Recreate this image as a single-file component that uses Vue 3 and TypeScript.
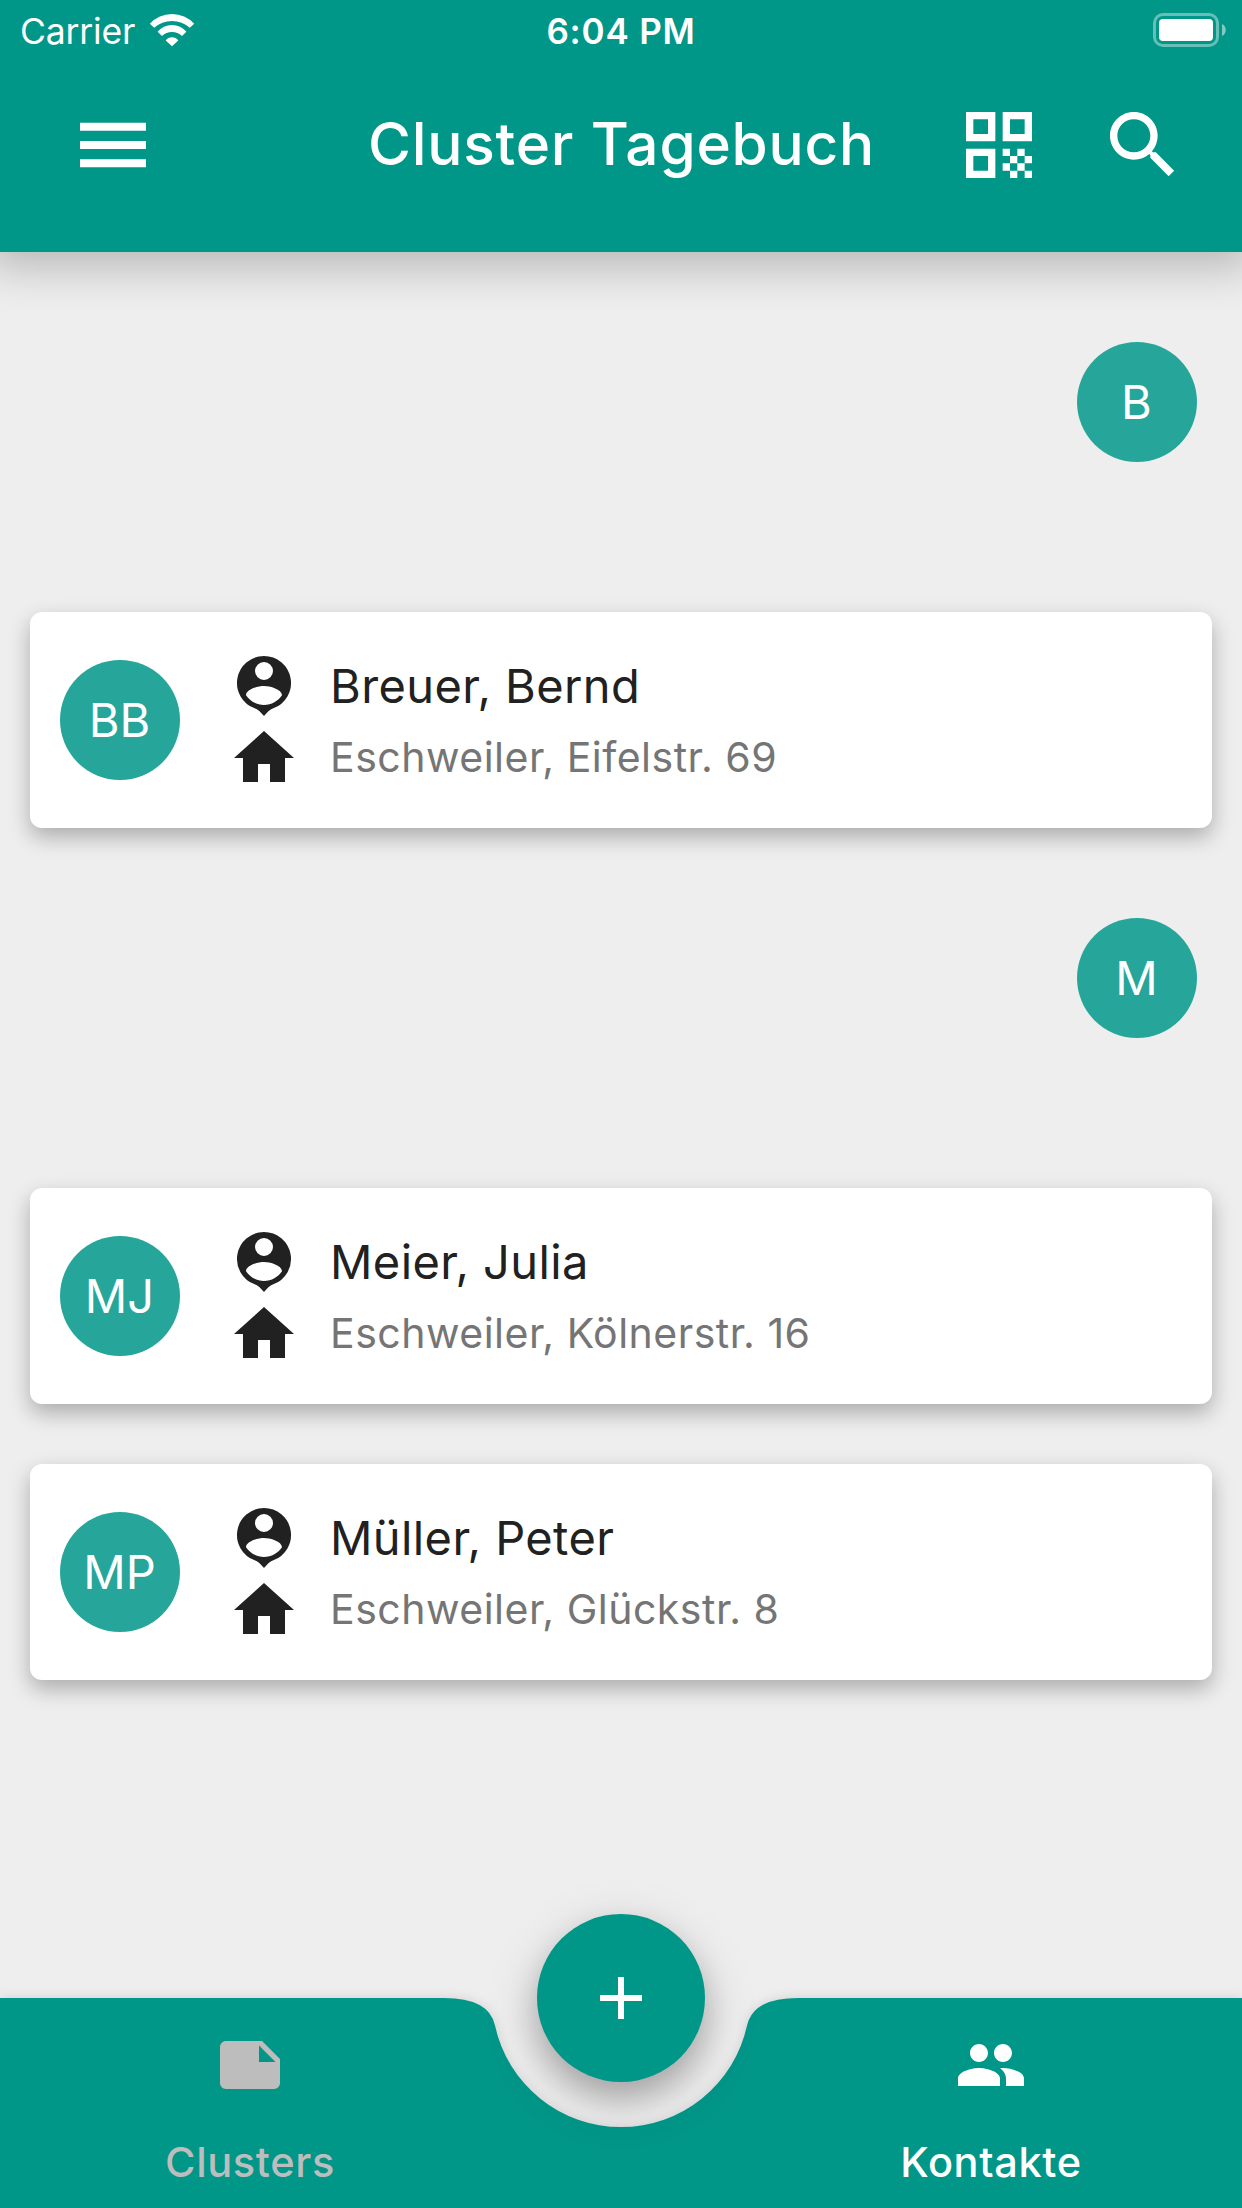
<script setup lang="ts">
interface Contact {
  initials: string
  name: string
  address: string
}

interface Section {
  letter: string
  contacts: Contact[]
}

const sections: Section[] = [
  {
    letter: 'B',
    contacts: [{ initials: 'BB', name: 'Breuer, Bernd', address: 'Eschweiler, Eifelstr. 69' }],
  },
  {
    letter: 'M',
    contacts: [
      { initials: 'MJ', name: 'Meier, Julia', address: 'Eschweiler, Kölnerstr. 16' },
      { initials: 'MP', name: 'Müller, Peter', address: 'Eschweiler, Glückstr. 8' },
    ],
  },
]
</script>

<template>
  <div class="screen">
    <header class="app-bar">
      <div class="status">
        <div class="status-left">
          <span class="carrier">Carrier</span>
          <svg class="wifi" width="46" height="34" viewBox="149 12.5 46 34">
            <path d="M149.8 23.2A30 30 0 0 1 194.2 23.2L189.8 27.3A26.5 26.5 0 0 0 154.2 27.3ZM157.6 31.3A18.6 18.6 0 0 1 186.4 31.3L182 35.6A14 14 0 0 0 162 35.6ZM165.7 39.9A8 8 0 0 1 178.3 39.9L172 45.7Z" />
          </svg>
        </div>
        <span class="time">6:04 PM</span>
        <div class="status-right">
          <svg width="74" height="34" viewBox="0 0 74 34">
            <rect x="1.5" y="1.5" width="63" height="31" rx="8.5" fill="none" stroke="#fff" stroke-opacity=".4" stroke-width="3" />
            <rect x="6" y="6" width="54" height="22" rx="4" fill="#fff" />
            <path d="M69 11c5 2 5 10 0 12z" fill="#fff" fill-opacity=".5" />
          </svg>
        </div>
      </div>
      <div class="toolbar">
        <svg class="tool menu" viewBox="0 0 24 24"><path d="M3 18.1h18v-2.2H3v2.2zm0-5h18v-2.2H3v2.2zm0-7.2v2.2h18V5.9H3z" /></svg>
        <h1 class="title">Cluster Tagebuch</h1>
        <svg class="tool qr" viewBox="0 0 24 24">
          <path d="M3 11h8V3H3v8zm2-6h4v4H5V5zM3 21h8v-8H3v8zm2-6h4v4H5v-4zM13 3v8h8V3h-8zm6 6h-4V5h4v4zM13 13h2v2h-2zM17 13h2v2h-2zM15 15h2v2h-2zM19 15h2v2h-2zM13 17h2v2h-2zM17 17h2v2h-2zM15 19h2v2h-2zM19 19h2v2h-2z" />
        </svg>
        <svg class="tool search" viewBox="0 0 24 24">
          <path d="M15.5 14h-.79l-.28-.27C15.41 12.59 16 11.11 16 9.5 16 5.91 13.09 3 9.5 3S3 5.91 3 9.5 5.91 16 9.5 16c1.61 0 3.09-.59 4.23-1.57l.27.28v.79l5 4.99L20.49 19l-4.99-5zm-6 0C7.01 14 5 11.99 5 9.5S7.01 5 9.5 5 14 7.01 14 9.5 11.99 14 9.5 14z" />
        </svg>
      </div>
    </header>

    <main class="list">
      <section v-for="section in sections" :key="section.letter">
        <div class="separator"><div class="avatar">{{ section.letter }}</div></div>
        <article v-for="contact in section.contacts" :key="contact.initials" class="card">
          <div class="avatar">{{ contact.initials }}</div>
          <div class="icons">
            <svg viewBox="0 0 24 24">
              <path fill-rule="evenodd" d="M12 2a9 9 0 0 0-3.1 17.45C10.2 19.9 10.9 20.9 12 22c1.1-1.1 1.8-2.1 3.1-2.55A9 9 0 0 0 12 2zm0 2a3 3 0 1 1 0 6 3 3 0 0 1 0-6zm0 14.3c-2.5 0-4.71-1.28-6-3.22.03-1.99 4-3.08 6-3.08 1.99 0 5.97 1.09 6 3.08-1.29 1.94-3.5 3.22-6 3.22z" />
            </svg>
            <svg viewBox="0 0 24 24"><path d="M10 20v-6h4v6h5v-8h3L12 3 2 12h3v8z" /></svg>
          </div>
          <div class="lines">
            <div class="name"><span>{{ contact.name }}</span></div>
            <div class="address"><span>{{ contact.address }}</span></div>
          </div>
        </article>
      </section>
    </main>

    <nav class="bottom">
      <svg class="bottom-shape" width="1242" height="210" viewBox="0 0 1242 210">
        <path d="M0 0H444Q489 0 494.93 27.35A129 129 0 0 0 747.07 27.35Q753 0 798 0H1242V210H0Z" />
      </svg>
      <div class="tab">
        <svg viewBox="0 0 24 24"><path d="M22 10l-6-6H4c-1.1 0-2 .9-2 2v12.01c0 1.1.9 1.99 2 1.99l16-.01c1.1 0 2-.89 2-1.99v-8zm-7-4.5l5.5 5.5H15V5.5z" /></svg>
        <span>Clusters</span>
      </div>
      <button class="fab" type="button" aria-label="+">
        <svg viewBox="0 0 24 24"><path d="M19 13h-6v6h-2v-6H5v-2h6V5h2v6h6v2z" /></svg>
      </button>
      <div class="tab active">
        <svg viewBox="0 0 24 24">
          <path d="M16 11c1.66 0 2.99-1.34 2.99-3S17.66 5 16 5c-1.66 0-3 1.34-3 3s1.34 3 3 3zm-8 0c1.66 0 2.99-1.34 2.99-3S9.66 5 8 5C6.34 5 5 6.34 5 8s1.34 3 3 3zm0 2c-2.33 0-7 1.17-7 3.5V19h14v-2.5c0-2.33-4.67-3.5-7-3.5zm8 0c-.29 0-.62.02-.97.05 1.16.84 1.97 1.97 1.97 3.45V19h6v-2.5c0-2.33-4.67-3.5-7-3.5z" />
        </svg>
        <span>Kontakte</span>
      </div>
    </nav>
  </div>
</template>

<style>
body {
  margin: 0;
  background: #eee;
}
</style>

<style scoped>
.screen {
  width: 1242px;
  height: 2208px;
  display: flex;
  flex-direction: column;
  overflow: hidden;
  background: #eee;
  font-family: Inter, Roboto, sans-serif;
  color: #fff;
}
svg {
  display: block;
  flex: none;
  fill: currentColor;
}
.app-bar {
  position: relative;
  flex: none;
  box-sizing: border-box;
  height: 252px;
  background: #009688;
  box-shadow: 0 3px 42px 12px rgba(0, 0, 0, 0.23);
}
.status {
  display: grid;
  grid-template-columns: 1fr auto 1fr;
  height: 60px;
  padding: 0 15px;
}
.status-left {
  display: flex;
  align-items: flex-start;
  padding-left: 5px;
}
.carrier {
  width: 129px;
  font-size: 35.5px;
  line-height: 63px;
  letter-spacing: -0.15px;
  white-space: nowrap;
}
.wifi {
  margin-top: 12.5px;
}
.time {
  font-size: 35px;
  font-weight: 600;
  line-height: 63px;
  letter-spacing: 0.8px;
}
.status-right {
  display: flex;
  justify-content: flex-end;
  padding-top: 13px;
}
.toolbar {
  display: flex;
  align-items: center;
  height: 169px;
  padding: 0 55px 0 68.5px;
}
.tool {
  width: 88px;
  height: 88px;
}
.title {
  width: 504px;
  margin: -2px 83px 0 211.5px;
  font-size: 58.5px;
  font-weight: 500;
  line-height: 72px;
  letter-spacing: 0.8px;
  white-space: nowrap;
}
.search {
  margin-left: 56px;
}
.list {
  flex: 1;
  padding-top: 30px;
}
.separator {
  display: flex;
  justify-content: flex-end;
  box-sizing: border-box;
  height: 300px;
  padding: 60px 45px 0 0;
}
.avatar {
  display: flex;
  flex: none;
  align-items: center;
  justify-content: center;
  box-sizing: border-box;
  width: 120px;
  height: 120px;
  padding-right: 1px;
  border-radius: 50%;
  background: #26a69a;
  font-size: 47px;
  line-height: 60px;
}
.card {
  display: flex;
  align-items: center;
  box-sizing: border-box;
  height: 216px;
  margin: 30px 30px 60px;
  padding: 0 30px;
  border-radius: 12px;
  background: #fff;
  box-shadow: 0 9px 21px rgba(0, 0, 0, 0.28);
  color: #212121;
}
.card:last-child {
  margin-bottom: 30px;
}
.card + .card {
  margin-top: 0;
}
.card .avatar {
  color: #fff;
}
.icons {
  margin: 4px 0 0 48px;
}
.icons svg {
  width: 72px;
  height: 72px;
}
.lines {
  margin: 2px 0 0 30px;
  white-space: nowrap;
}
.name {
  font-size: 47px;
  line-height: 60px;
  letter-spacing: 0.4px;
}
.address {
  margin-top: 11px;
  font-size: 41px;
  line-height: 60px;
  letter-spacing: 0.5px;
  color: #757575;
}
.bottom {
  position: relative;
  display: flex;
  flex: none;
  justify-content: space-between;
  height: 210px;
}
.bottom-shape {
  position: absolute;
  inset: 0;
  overflow: visible;
  fill: #009688;
  filter: drop-shadow(0 0 6px rgba(0, 0, 0, 0.12));
}
.tab {
  position: relative;
  display: flex;
  flex-direction: column;
  align-items: center;
  box-sizing: border-box;
  width: 501px;
  padding: 31px 1px 0 0;
  color: #bdbdbd;
  font-size: 41.5px;
  font-weight: 500;
  line-height: 60px;
  letter-spacing: 0.65px;
}
.tab.active {
  color: #fff;
}
.tab svg {
  width: 72px;
  height: 72px;
  margin-bottom: 31px;
}
.fab {
  position: relative;
  display: flex;
  flex: none;
  align-items: center;
  justify-content: center;
  width: 168px;
  height: 168px;
  margin-top: -84px;
  padding: 0;
  border: 0;
  border-radius: 50%;
  background: #009688;
  color: #fff;
  box-shadow: 0 16px 30px rgba(0, 0, 0, 0.22), 0 16px 54px 4px rgba(0, 0, 0, 0.13);
}
.fab svg {
  width: 72px;
  height: 72px;
}
</style>
